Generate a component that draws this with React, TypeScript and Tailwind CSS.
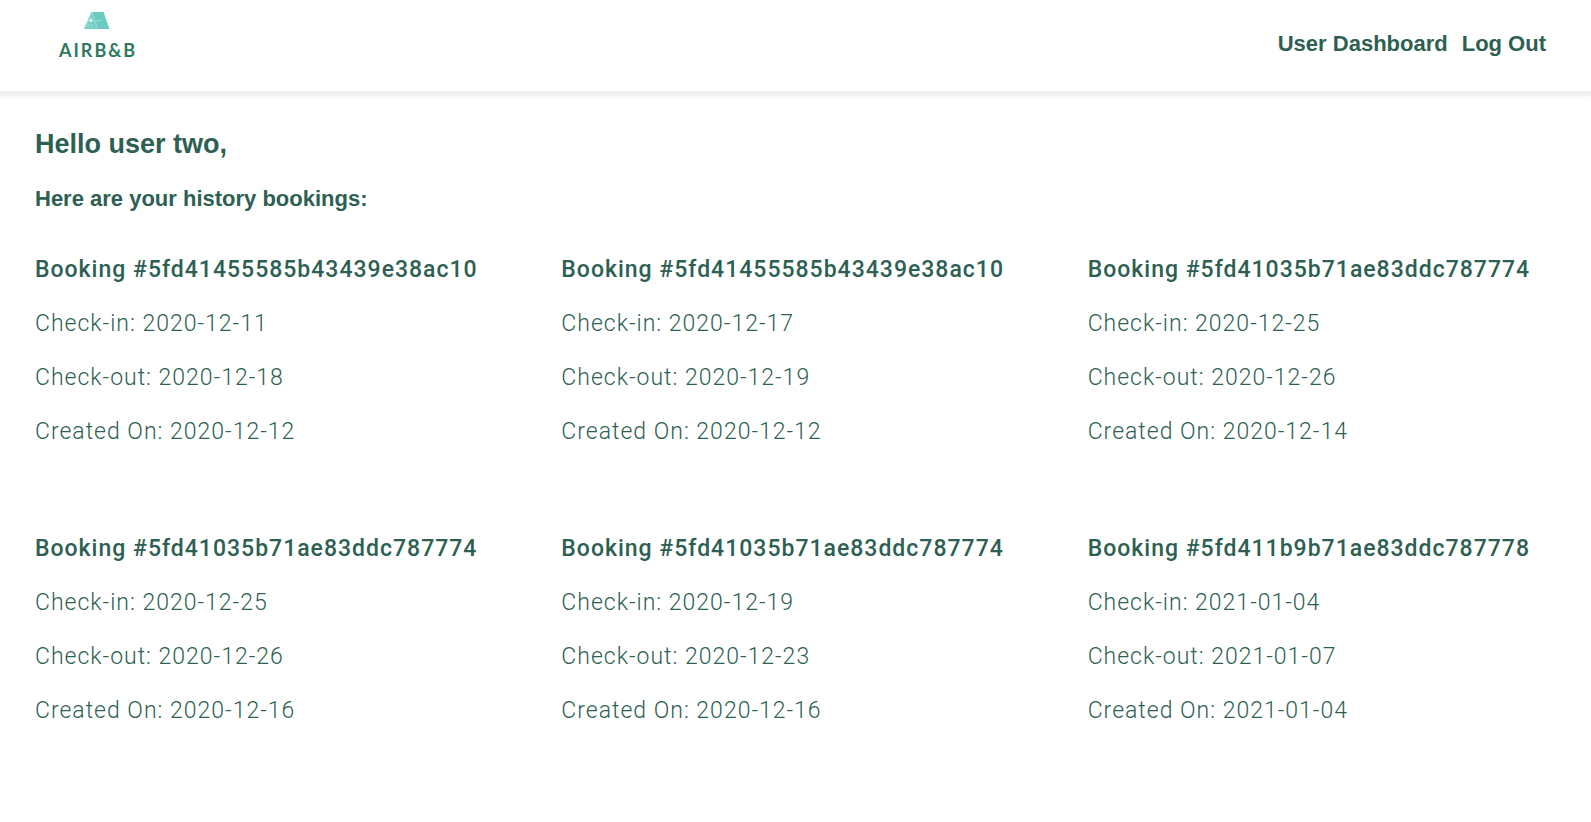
type Booking = {
  id: string;
  checkIn: string;
  checkOut: string;
  createdOn: string;
};

const bookings: Booking[] = [
  { id: "5fd41455585b43439e38ac10", checkIn: "2020-12-11", checkOut: "2020-12-18", createdOn: "2020-12-12" },
  { id: "5fd41455585b43439e38ac10", checkIn: "2020-12-17", checkOut: "2020-12-19", createdOn: "2020-12-12" },
  { id: "5fd41035b71ae83ddc787774", checkIn: "2020-12-25", checkOut: "2020-12-26", createdOn: "2020-12-14" },
  { id: "5fd41035b71ae83ddc787774", checkIn: "2020-12-25", checkOut: "2020-12-26", createdOn: "2020-12-16" },
  { id: "5fd41035b71ae83ddc787774", checkIn: "2020-12-19", checkOut: "2020-12-23", createdOn: "2020-12-16" },
  { id: "5fd411b9b71ae83ddc787778", checkIn: "2021-01-04", checkOut: "2021-01-07", createdOn: "2021-01-04" },
];

function Logo() {
  return (
    <a href="#" className="flex flex-col items-center gap-2">
      <svg width="28" height="18" viewBox="1 1 28 18" aria-hidden="true">
        <path d="M8.500 1H20.500L26.500 18H1Z" fill="#6bcabf" />
        <path d="M8.500 1L14.500 18H1Z" fill="#74cec3" />
        <path d="M8.700 1L14.800 18M7.500 4L2.500 17" stroke="#b5e8e1" strokeWidth="0.700" fill="none" />
        <path d="M6 9.500H10M8 7.500V11.500" stroke="#ecfaf8" strokeWidth="1.200" fill="none" />
        <path d="M5.200 18V14H8.800V18" stroke="#a3e0d8" strokeWidth="0.700" fill="none" />
        <path d="M12.500 9.800H18.500" stroke="#9adfd5" strokeWidth="1" />
      </svg>
      <span className="font-[Lato,sans-serif] text-[18px] leading-[24px] font-bold tracking-[2px] text-[#2d7a5f]">
        AIRB&amp;B
      </span>
    </a>
  );
}

function BookingCard({ booking }: { booking: Booking }) {
  return (
    <li className="flex flex-col gap-[27px] pl-[29px] font-[Roboto,sans-serif] text-[23px] leading-[27px] font-light tracking-[1px]">
      <h3 className="font-medium">Booking #{booking.id}</h3>
      <p>Check-in: {booking.checkIn}</p>
      <p>Check-out: {booking.checkOut}</p>
      <p>Created On: {booking.createdOn}</p>
    </li>
  );
}

export default function App() {
  return (
    <div className="min-h-screen bg-white font-['Liberation_Sans',Arial,sans-serif] text-[#2d5f53]">
      <header className="flex items-start justify-between border-b-4 border-[#efefef] pt-3 pr-[45px] pb-[29px] pl-[59px] shadow-[0_1px_2px_0_#efefef]">
        <Logo />
        <nav className="flex gap-[14px] pt-[18px] text-[22px] leading-[27px] font-bold">
          <a href="#">User Dashboard</a>
          <a href="#">Log Out</a>
        </nav>
      </header>
      <main className="px-[6px] pt-[34px] pb-16">
        <div className="flex flex-col gap-[26px] pl-[29px] font-bold">
          <h1 className="text-[27px] leading-[30px]">Hello user two,</h1>
          <h2 className="text-[22px] leading-[27px]">Here are your history bookings:</h2>
        </div>
        <ul className="grid grid-cols-3 gap-y-[90px] pt-[44px]">
          {bookings.map((booking, index) => (
            <BookingCard key={index} booking={booking} />
          ))}
        </ul>
      </main>
    </div>
  );
}
